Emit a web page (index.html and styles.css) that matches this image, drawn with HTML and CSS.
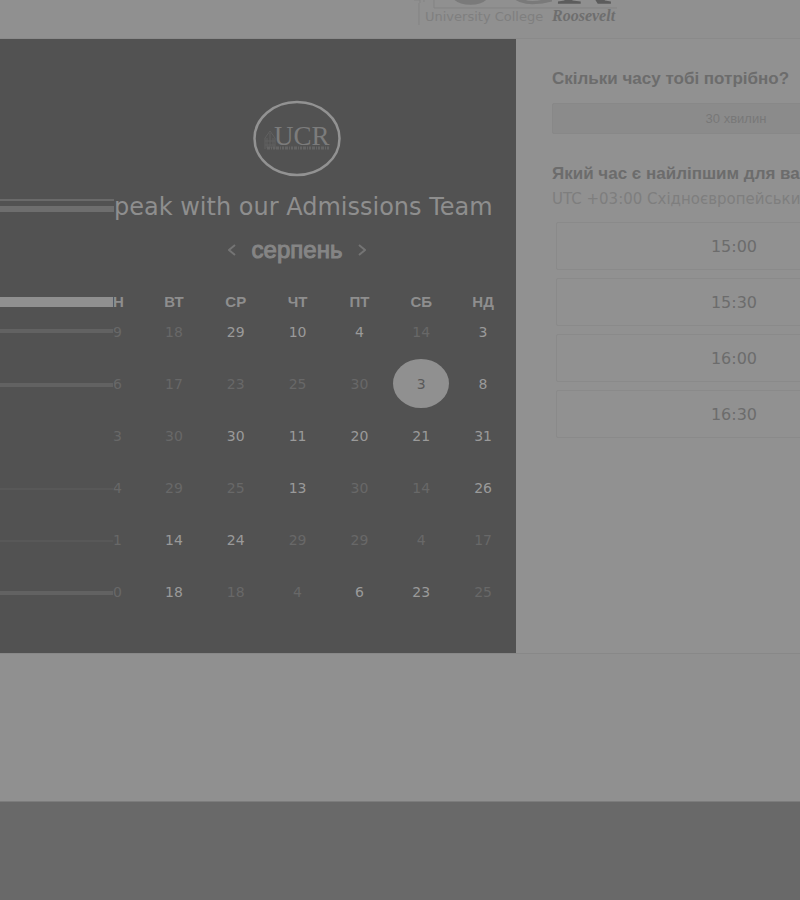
FILE: index.html
```
<!DOCTYPE html>
<html lang="uk">
<head>
<meta charset="utf-8">
<title>Speak with our Admissions Team</title>
<link rel="stylesheet" href="styles.css">
</head>
<body>
<header class="top">
  <svg class="brand" width="210" height="38" viewBox="0 0 210 38" role="img" aria-label="University College Roosevelt">
    <path d="M4 0h6v3M9 3v22M24 0v8H207M14 0v2" fill="none" stroke="#838383"/>
    <text x="30" y="4" class="brand-big">UC</text>
    <text x="145" y="4" class="brand-big brand-r">R</text>
    <text x="15" y="21" class="brand-name">University College</text>
    <text x="142" y="21" class="brand-last">Roosevelt</text>
  </svg>
</header>
<main class="booking">
  <section class="calendar">
    <svg class="badge" width="88" height="78" viewBox="0 0 88 78" role="img" aria-label="UCR">
      <ellipse cx="44" cy="38.500" rx="42.500" ry="36.500" fill="none" stroke="#929292" stroke-width="2.500"/>
      <path d="M12 49V38l5-7 5 7v11M14 48V38M17 48V33M20 48V38M12 41h10M12 45h10" fill="none" stroke="#606060"/>
      <text x="21" y="45" class="badge-text">UCR</text>
      <path d="M14 48h62" stroke="#646464" stroke-width="3" stroke-dasharray="3 1 1 1 2 1"/>
    </svg>
    <div class="title-row">
      <div class="title-lines"></div>
      <h1>peak with our Admissions Team</h1>
    </div>
    <div class="month">
      <button type="button" aria-label="Попередній місяць"><svg width="8" height="12" viewBox="0 0 8 12"><path d="M7 1 1 6l6 5"/></svg></button>
      <h2>серпень</h2>
      <button type="button" aria-label="Наступний місяць"><svg width="8" height="12" viewBox="0 0 8 12"><path d="m1 1 6 5-6 5"/></svg></button>
    </div>
    <table class="days">
      <thead><tr><td class="lead"><div class="bar bar-head"></div></td><th>Н</th><th>ВТ</th><th>СР</th><th>ЧТ</th><th>ПТ</th><th>СБ</th><th>НД</th></tr></thead>
      <tbody>
        <tr><td class="lead"><div class="bar bar-a"></div></td><td><button type="button" disabled>9</button></td><td><button type="button" disabled>18</button></td><td><button type="button">29</button></td><td><button type="button">10</button></td><td><button type="button">4</button></td><td><button type="button" disabled>14</button></td><td><button type="button">3</button></td></tr>
        <tr><td class="lead"><div class="bar bar-b"></div></td><td><button type="button" disabled>6</button></td><td><button type="button" disabled>17</button></td><td><button type="button" disabled>23</button></td><td><button type="button" disabled>25</button></td><td><button type="button" disabled>30</button></td><td><button type="button" class="selected">3</button></td><td><button type="button">8</button></td></tr>
        <tr><td class="lead"></td><td><button type="button" disabled>3</button></td><td><button type="button" disabled>30</button></td><td><button type="button">30</button></td><td><button type="button">11</button></td><td><button type="button">20</button></td><td><button type="button">21</button></td><td><button type="button">31</button></td></tr>
        <tr><td class="lead"><div class="bar bar-faint"></div></td><td><button type="button" disabled>4</button></td><td><button type="button" disabled>29</button></td><td><button type="button" disabled>25</button></td><td><button type="button">13</button></td><td><button type="button" disabled>30</button></td><td><button type="button" disabled>14</button></td><td><button type="button">26</button></td></tr>
        <tr><td class="lead"><div class="bar bar-faint"></div></td><td><button type="button" disabled>1</button></td><td><button type="button">14</button></td><td><button type="button">24</button></td><td><button type="button" disabled>29</button></td><td><button type="button" disabled>29</button></td><td><button type="button" disabled>4</button></td><td><button type="button" disabled>17</button></td></tr>
        <tr><td class="lead"><div class="bar bar-b"></div></td><td><button type="button" disabled>0</button></td><td><button type="button">18</button></td><td><button type="button" disabled>18</button></td><td><button type="button" disabled>4</button></td><td><button type="button">6</button></td><td><button type="button">23</button></td><td><button type="button" disabled>25</button></td></tr>
      </tbody>
    </table>
  </section>
  <section class="times">
    <h3>Скільки часу тобі потрібно?</h3>
    <button type="button" class="duration">30 хвилин</button>
    <h3>Який час є найліпшим для вас?</h3>
    <p class="zone">UTC +03:00 Східноєвропейський</p>
    <div class="slots">
      <button type="button">15:00</button>
      <button type="button">15:30</button>
      <button type="button">16:00</button>
      <button type="button">16:30</button>
    </div>
  </section>
</main>
<footer class="foot"></footer>
</body>
</html>
```
FILE: styles.css
```
* { box-sizing: border-box; }
body {
  margin: 0;
  min-height: 100vh;
  display: flex;
  flex-direction: column;
  overflow: hidden;
  background: #909090;
  font-family: "DejaVu Sans", "Liberation Sans", sans-serif;
}
h1, h2, h3, p { margin: 0; }
button { font: inherit; color: inherit; background: none; border: 0; padding: 0; }

.top { height: 39px; display: flex; justify-content: center; padding-left: 230px; border-bottom: 1px solid #8a8a8a; }
.brand { display: block; overflow: hidden; }
.brand-big { font: 84px "Liberation Serif", serif; fill: #7a7a7a; }
.brand-r { fill: #5c5c5c; }
.brand-name { font: 13px "DejaVu Sans", sans-serif; fill: #7f7f7f; }
.brand-last { font: italic bold 16px "Liberation Serif", serif; fill: #6e6e6e; }

.booking {
  display: grid;
  grid-template-columns: minmax(0, 516fr) minmax(0, 284fr);
  border-bottom: 1px solid #888;
}
.calendar { background: #525252; color: #8e8e8e; padding: 61px 0 27px; }
.badge { display: block; margin-left: 253px; }
.badge-text { font: 27px "Liberation Serif", serif; fill: #7c7c7c; }

.title-row { display: flex; margin-top: 14px; height: 30px; }
.title-lines { flex: 0 0 114px; margin-top: 7px; height: 13px; border-top: 2px solid #6a6a6a; border-bottom: 6px solid #6e6e6e; }
h1 { font-size: 24px; line-height: 30px; font-weight: 400; white-space: nowrap; }

.month { display: flex; align-items: center; justify-content: center; gap: 16px; height: 32px; margin: 12px 0 24px 78px; }
.month h2 { font: 400 24px/32px "Liberation Sans", sans-serif; -webkit-text-stroke: 1px #858585; color: #858585; }
.month svg { display: block; fill: none; stroke: #747474; stroke-width: 2; }

.days { width: calc(100% - 2px); border-collapse: collapse; table-layout: fixed; }
.days th, .days td { padding: 0; text-align: center; vertical-align: top; }
.days thead tr { height: 24px; }
.days th { font: bold 15px/24px "Liberation Sans", sans-serif; }
.days tbody tr { height: 52px; }
.days .lead { width: 113px; }
.days .lead + * { width: 30px; text-align: left; }
.days td button { display: block; position: relative; width: 100%; font-size: 14px; line-height: 36px; color: #9a9a9a; z-index: 0; }
.days .lead + td button { text-align: left; }
.days td button:disabled { color: #686868; }
.days td .selected { color: #5a5a5a; }
.selected::before {
  content: "";
  position: absolute;
  z-index: -1;
  width: 56px;
  height: 49px;
  left: calc(50% - 28px);
  top: -7px;
  border-radius: 50%;
  background: #909090;
}
.bar { height: 4px; margin-top: 15px; background: #626262; }
.bar-head { height: 10px; margin-top: 7px; background: #909090; }
.bar-b { margin-top: 17px; }
.bar-faint { height: 2px; margin-top: 18px; background: #585858; }

.times { background: #919191; padding: 28px 0 0 36px; color: #6c6c6c; overflow: hidden; }
.times > * { width: 368px; }
.times h3 { font: bold 17px/24px "Liberation Sans", sans-serif; white-space: nowrap; }
.duration { display: block; height: 31px; margin: 12px 0 28px; border: 1px solid #888; border-radius: 2px; background: #8b8b8b; font-family: "Liberation Sans", sans-serif; font-size: 13px; color: #787878; }
.times .zone { font-size: 15px; line-height: 26px; color: #7e7e7e; white-space: nowrap; }
.slots { display: grid; gap: 8px; padding: 0 8px 0 4px; margin-top: 10px; }
.slots button { height: 48px; border: 1px solid #8a8a8a; border-radius: 2px; font-size: 16px; color: #6c6c6c; }

.foot { margin-top: auto; height: 99px; background: #696969; border-top: 1px solid #7c7c7c; }
```
